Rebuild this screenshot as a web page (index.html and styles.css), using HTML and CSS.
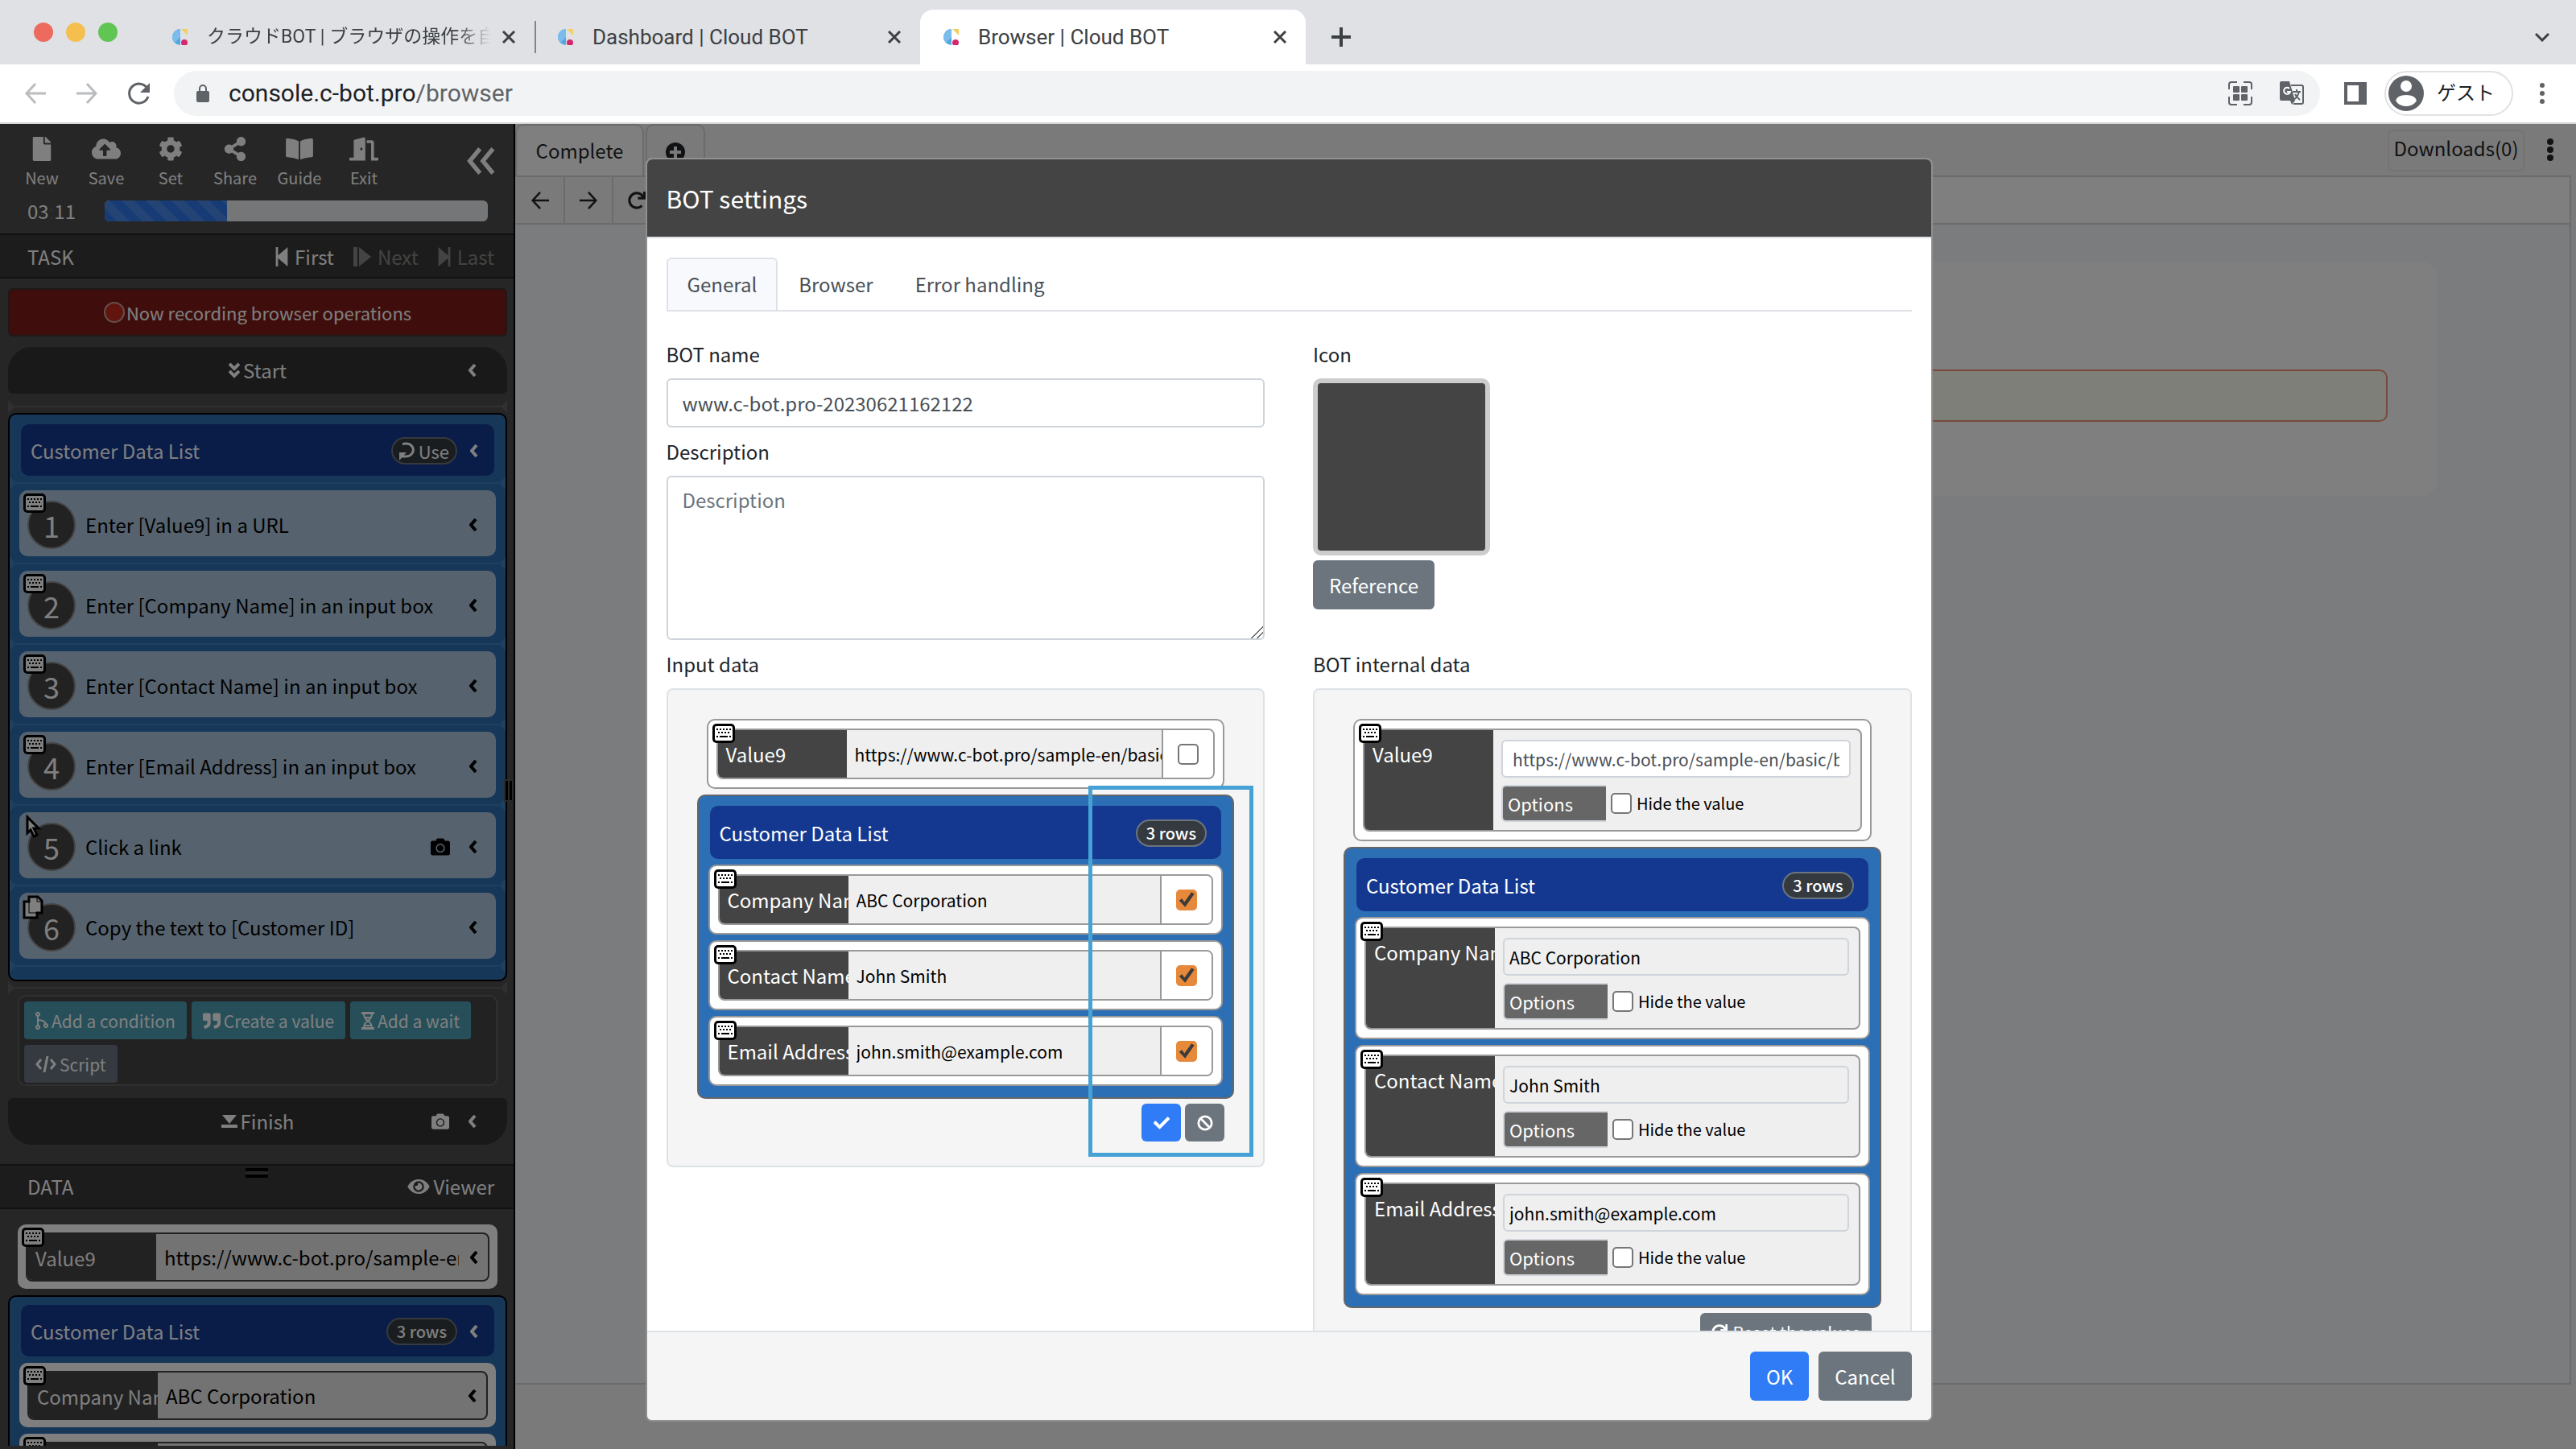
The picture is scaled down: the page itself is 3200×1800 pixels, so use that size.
FILE: index.html
```html
<!DOCTYPE html>
<html lang="en">
<head>
  <meta charset="UTF-8">
  <meta name="viewport" content="width=device-width, initial-scale=1.0">
  <title>Browser | Cloud BOT</title>
  <link rel="stylesheet" href="styles.css">
</head>
<body>
  <!-- icon sprite -->
  <svg class="sprite" aria-hidden="true">
    <symbol id="i-logo" viewBox="0 0 20 20"><path fill="#4fa9e0" d="M11 0A10 10 0 0 0 11 20Z"/><path fill="#7cbcec" d="M11 0A10 10 0 0 0 4 17L11 10Z"/><path fill="#f2cf63" d="M12 0h8v8Z"/><circle fill="#d42a6d" cx="16" cy="17" r="4"/></symbol>
    <symbol id="i-x" viewBox="0 0 16 16"><path d="M1 1l14 14M15 1L1 15" stroke="currentColor" stroke-width="3"/></symbol>
    <symbol id="i-plus" viewBox="0 0 24 24"><path d="M12 0v24M0 12h24" stroke="currentColor" stroke-width="4"/></symbol>
    <symbol id="i-down" viewBox="0 0 18 12"><path d="M1 2l8 8 8-8" fill="none" stroke="currentColor" stroke-width="3"/></symbol>
    <symbol id="i-back" viewBox="0 0 26 26"><path d="M26 13H2M13 1L2 13l11 12" fill="none" stroke="currentColor" stroke-width="3"/></symbol>
    <symbol id="i-fwd" viewBox="0 0 26 26"><path d="M0 13h24M13 1l11 12-11 12" fill="none" stroke="currentColor" stroke-width="3"/></symbol>
    <symbol id="i-reload" viewBox="0 0 28 28"><path d="M24 8A12 12 0 1 0 25 18" fill="none" stroke="currentColor" stroke-width="3"/><path fill="currentColor" d="M27 1v12H15Z"/></symbol>
    <symbol id="i-lock" viewBox="0 0 16 22"><rect y="8" width="16" height="14" rx="2" fill="currentColor"/><path d="M4 9V5a4 4 0 0 1 8 0v4" fill="none" stroke="currentColor" stroke-width="2"/></symbol>
    <symbol id="i-apps" viewBox="0 0 30 30"><path d="M1 10V4a3 3 0 0 1 3-3h7M19 1h7a3 3 0 0 1 3 3v6M29 19v7a3 3 0 0 1-3 3h-7M11 29H4a3 3 0 0 1-3-3v-7" fill="none" stroke="currentColor" stroke-width="2"/><g fill="currentColor"><rect x="6" y="6" width="8" height="8" rx="1"/><rect x="16" y="6" width="8" height="8" rx="1"/><rect x="6" y="16" width="8" height="8" rx="1"/><rect x="16" y="16" width="8" height="8" rx="1"/></g></symbol>
    <symbol id="i-translate" viewBox="0 0 30 30"><path d="M14 5h13a2 2 0 0 1 2 2v19a2 2 0 0 1-2 2H17" fill="none" stroke="currentColor" stroke-width="2"/><path fill="currentColor" d="M2 0h10l7 24-4 5-2-5H2a2 2 0 0 1-2-2V2a2 2 0 0 1 2-2Z"/><path d="M12 9a4 4 0 1 0 1 4H9" fill="none" stroke="#fff" stroke-width="2"/><path d="M16 13h10M21 10v3M24 13q-2 7-7 10M19 16q2 4 6 7" fill="none" stroke="currentColor" stroke-width="2"/></symbol>
    <symbol id="i-panel" viewBox="0 0 28 28"><path fill="currentColor" fill-rule="evenodd" d="M0 0h28v28H0ZM4 4v20h14V4Z"/></symbol>
    <symbol id="i-user" viewBox="0 0 44 44"><circle cx="22" cy="22" r="22" fill="currentColor"/><circle cx="22" cy="13" r="7" fill="#fff"/><path fill="#fff" d="M9 31q2-7 13-7t13 7q-4 7-13 7T9 31Z"/></symbol>
    <symbol id="i-dots" viewBox="0 0 8 26"><g fill="currentColor"><circle cx="4" cy="3" r="3"/><circle cx="4" cy="13" r="3"/><circle cx="4" cy="23" r="3"/></g></symbol>
    <symbol id="i-vdots" viewBox="0 0 8 28"><g fill="currentColor"><circle cx="4" cy="4" r="4"/><circle cx="4" cy="14" r="4"/><circle cx="4" cy="24" r="4"/></g></symbol>
    <symbol id="i-file" viewBox="0 0 384 512"><path fill="currentColor" d="M224 136V0H24C10.700 0 0 10.700 0 24v464c0 13.300 10.700 24 24 24h336c13.300 0 24-10.700 24-24V160H248c-13.200 0-24-10.800-24-24zm160-14.100v6.100H256V0h6.100c6.400 0 12.500 2.500 17 7l97.900 98c4.500 4.500 7 10.600 7 16.900z"/></symbol>
    <symbol id="i-save" viewBox="0 0 640 512"><path fill="currentColor" d="M537.6 226.6c4.1-10.7 6.4-22.4 6.4-34.6 0-53-43-96-96-96-19.7 0-38.1 6-53.3 16.2C367 64.2 315.3 32 256 32c-88.4 0-160 71.6-160 160 0 2.700.1 5.400.2 8.100C40.200 219.800 0 273.200 0 336c0 79.500 64.500 144 144 144h368c70.700 0 128-57.300 128-128 0-61.900-44-113.600-102.400-125.400zM393.400 288H328v112c0 8.800-7.200 16-16 16h-48c-8.800 0-16-7.200-16-16V288h-65.400c-14.300 0-21.400-17.200-11.300-27.300l105.400-105.400c6.200-6.200 16.400-6.200 22.600 0l105.400 105.400c10.100 10.100 2.900 27.300-11.300 27.300z"/></symbol>
    <symbol id="i-cog" viewBox="0 0 512 512"><path fill="currentColor" d="M487.4 315.7l-42.6-24.6c4.3-23.2 4.3-47 0-70.2l42.6-24.6c4.9-2.8 7.1-8.6 5.5-14-11.1-35.6-30-67.8-54.7-94.6-3.8-4.1-10-5.1-14.8-2.3L380.8 110c-17.9-15.4-38.5-27.3-60.8-35.1V25.8c0-5.6-3.9-10.5-9.4-11.700-36.700-8.200-74.300-7.800-109.200 0-5.500 1.200-9.400 6.100-9.400 11.700V75c-22.200 7.900-42.800 19.800-60.800 35.100L88.700 85.500c-4.900-2.800-11-1.900-14.800 2.300-24.700 26.700-43.600 58.900-54.700 94.600-1.700 5.400.6 11.200 5.500 14L67.300 221c-4.300 23.200-4.300 47 0 70.200l-42.600 24.600c-4.900 2.800-7.100 8.600-5.500 14 11.100 35.600 30 67.800 54.700 94.600 3.800 4.100 10 5.100 14.800 2.300l42.600-24.600c17.900 15.400 38.500 27.300 60.800 35.100v49.200c0 5.600 3.900 10.500 9.400 11.700 36.700 8.200 74.300 7.800 109.200 0 5.500-1.200 9.400-6.100 9.400-11.700v-49.200c22.200-7.900 42.800-19.800 60.800-35.100l42.600 24.600c4.900 2.800 11 1.900 14.800-2.300 24.700-26.700 43.600-58.900 54.700-94.600 1.500-5.500-.7-11.300-5.600-14.100zM256 336c-44.100 0-80-35.900-80-80s35.900-80 80-80 80 35.900 80 80-35.900 80-80 80z"/></symbol>
    <symbol id="i-share" viewBox="0 0 448 512"><path fill="currentColor" d="M352 320c-22.608 0-43.387 7.819-59.79 20.895l-102.486-64.054a96.551 96.551 0 0 0 0-41.683l102.486-64.054C308.613 184.181 329.392 192 352 192c53.019 0 96-42.981 96-96S405.019 0 352 0s-96 42.981-96 96c0 7.158.79 14.13 2.276 20.841L155.79 180.895C139.387 167.819 118.608 160 96 160c-53.019 0-96 42.981-96 96s42.981 96 96 96c22.608 0 43.387-7.819 59.79-20.895l102.486 64.054A96.301 96.301 0 0 0 256 416c0 53.019 42.981 96 96 96s96-42.981 96-96-42.981-96-96-96z"/></symbol>
    <symbol id="i-book" viewBox="0 0 576 512"><path fill="currentColor" d="M542.22 32.05c-54.8 3.11-163.72 14.43-230.96 55.59-4.64 2.84-7.27 7.89-7.27 13.17v363.87c0 11.55 12.63 18.85 23.28 13.49 69.18-34.82 169.23-44.32 218.7-46.92 16.89-.89 30.02-14.43 30.02-30.66V62.75c.01-17.71-15.35-31.74-33.77-30.7zM264.73 87.64C197.5 46.48 88.58 35.17 33.78 32.05 15.36 31.01 0 45.04 0 62.75V400.6c0 16.24 13.13 29.78 30.02 30.66 49.49 2.6 149.59 12.11 218.77 46.95 10.62 5.35 23.21-1.94 23.21-13.46V100.63c0-5.29-2.62-10.14-7.27-12.99z"/></symbol>
    <symbol id="i-exit" viewBox="0 0 640 512"><path fill="currentColor" d="M624 448h-80V113.450C544 86.190 522.470 64 496 64H384v64h96v384h144c8.840 0 16-7.160 16-16v-32c0-8.840-7.160-16-16-16zM312.240 1.010l-192 49.740C105.990 54.440 96 67.700 96 82.920V448H16c-8.840 0-16 7.160-16 16v32c0 8.840 7.160 16 16 16h336V33.180c0-21.580-19.560-37.410-39.760-32.170zM264 288c-13.250 0-24-14.330-24-32s10.750-32 24-32 24 14.330 24 32-10.750 32-24 32z"/></symbol>
    <symbol id="i-fold" viewBox="0 0 40 40"><path d="M18 3L4 20l14 17M36 3L22 20l14 17" fill="none" stroke="currentColor" stroke-width="6"/></symbol>
    <symbol id="i-first" viewBox="0 0 16 26"><path fill="currentColor" d="M0 0h3v11L16 0v26L3 15v11H0Z"/></symbol>
    <symbol id="i-last" viewBox="0 0 16 26"><path fill="currentColor" d="M16 0h-3v11L0 0v26l13-11v11h3Z"/></symbol>
    <symbol id="i-next" viewBox="0 0 22 24"><path fill="currentColor" d="M0 0h5v24H0ZM7 0l15 12L7 24Z"/></symbol>
    <symbol id="i-start" viewBox="0 0 14 20"><path d="M1 2l6 6 6-6M1 11l6 6 6-6" fill="none" stroke="currentColor" stroke-width="4"/></symbol>
    <symbol id="i-finish" viewBox="0 0 20 16"><path fill="currentColor" d="M1 0h18l-9 11ZM0 12h20v4H0Z"/></symbol>
    <symbol id="i-left" viewBox="0 0 10 16"><path d="M8 1L2 8l6 7" fill="none" stroke="currentColor" stroke-width="4"/></symbol>
    <symbol id="i-loop" viewBox="0 0 20 24"><path d="M4 4a9 8 0 1 1 4 15H3" fill="none" stroke="currentColor" stroke-width="3"/><path fill="currentColor" d="M0 24V14h9Z"/></symbol>
    <symbol id="i-keyboard" viewBox="0 0 30 26"><rect x="1" y="1" width="28" height="24" rx="5" fill="#000"/><rect x="4" y="4" width="22" height="18" rx="2" fill="#fff"/><path d="M6 8h18M8 12h14" stroke="#000" stroke-width="2" stroke-dasharray="2 2"/><path d="M6 17h2M10 17h10M22 17h2" stroke="#000" stroke-width="2"/></symbol>
    <symbol id="i-cursor" viewBox="0 0 20 30"><path d="M3 3v20l4-4 4 8 4-2-4-8h6Z" fill="#fff" stroke="#000" stroke-width="3"/></symbol>
    <symbol id="i-copy" viewBox="0 0 26 30"><path d="M2 8h6V2h11l5 5v15h-6v6H2Z" fill="#fff" stroke="#000" stroke-width="3"/><path d="M8 8v14h10M18 3v5h5" fill="none" stroke="#000" stroke-width="1"/></symbol>
    <symbol id="i-camera" viewBox="0 0 512 512"><path fill="currentColor" d="M512 144v288c0 26.500-21.500 48-48 48H48c-26.500 0-48-21.500-48-48V144c0-26.500 21.500-48 48-48h88l12.300-32.900c7-18.700 24.900-31.100 44.900-31.100h125.500c20 0 37.900 12.400 44.900 31.100L376 96h88c26.500 0 48 21.500 48 48zM376 288c0-66.200-53.800-120-120-120s-120 53.800-120 120 53.800 120 120 120 120-53.800 120-120zm-32 0c0 48.500-39.500 88-88 88s-88-39.500-88-88 39.500-88 88-88 88 39.500 88 88z"/></symbol>
    <symbol id="i-branch" viewBox="0 0 16 22"><path d="M3 4v14M3 10q9 0 10 6" fill="none" stroke="currentColor" stroke-width="2"/><circle cx="3" cy="3" r="2" fill="none" stroke="currentColor" stroke-width="2"/><circle cx="3" cy="19" r="2" fill="none" stroke="currentColor" stroke-width="2"/><circle cx="13" cy="17" r="2" fill="none" stroke="currentColor" stroke-width="2"/></symbol>
    <symbol id="i-quote" viewBox="0 0 512 512"><path fill="currentColor" d="M464 32H336c-26.500 0-48 21.500-48 48v128c0 26.500 21.500 48 48 48h80v64c0 35.300-28.700 64-64 64h-8c-13.300 0-24 10.700-24 24v48c0 13.300 10.700 24 24 24h8c88.400 0 160-71.600 160-160V80c0-26.500-21.500-48-48-48zm-288 0H48C21.500 32 0 53.500 0 80v128c0 26.500 21.500 48 48 48h80v64c0 35.300-28.700 64-64 64h-8c-13.300 0-24 10.700-24 24v48c0 13.300 10.700 24 24 24h8c88.400 0 160-71.600 160-160V80c0-26.500-21.500-48-48-48z"/></symbol>
    <symbol id="i-wait" viewBox="0 0 16 22"><path fill="currentColor" d="M0 0h16v3H0ZM0 19h16v3H0Z"/><path d="M3 2q0 6 5 9-5 3-5 9M13 2q0 6-5 9 5 3 5 9M4 7h8M4 17h8" fill="none" stroke="currentColor" stroke-width="2"/></symbol>
    <symbol id="i-code" viewBox="0 0 26 22"><path d="M7 5l-5 6 5 6M19 5l5 6-5 6M15 1l-4 20" fill="none" stroke="currentColor" stroke-width="3"/></symbol>
    <symbol id="i-eye" viewBox="0 0 576 512"><path fill="currentColor" d="M572.52 241.4C518.29 135.59 410.93 64 288 64S57.68 135.64 3.48 241.41a32.35 32.35 0 0 0 0 29.19C57.71 376.41 165.07 448 288 448s230.32-71.64 284.52-177.41a32.35 32.35 0 0 0 0-29.19zM288 400a144 144 0 1 1 144-144 143.93 143.93 0 0 1-144 144zm0-240a95.31 95.31 0 0 0-25.31 3.79 47.85 47.85 0 0 1-66.9 66.9A95.78 95.78 0 1 0 288 160z"/></symbol>
    <symbol id="i-add" viewBox="0 0 24 24"><circle cx="12" cy="12" r="12" fill="currentColor"/><path d="M12 5v14M5 12h14" stroke="#f4f4f4" stroke-width="4"/></symbol>
    <symbol id="i-redo" viewBox="0 0 512 512"><path fill="currentColor" d="M500.33 0h-47.410a12 12 0 0 0-12 12.570l4 82.760A247.420 247.420 0 0 0 256 8C119.340 8 7.900 119.530 8 256.190 8.100 393.070 119.100 504 256 504a247.100 247.100 0 0 0 166.180-63.910 12 12 0 0 0 .48-17.430l-34-34a12 12 0 0 0-16.380-.55A176 176 0 1 1 402.100 157.800l-101.530-4.870a12 12 0 0 0-12.570 12v47.410a12 12 0 0 0 12 12h200.330a12 12 0 0 0 12-12V12a12 12 0 0 0-12-12z"/></symbol>
    <symbol id="i-check" viewBox="0 0 512 512"><path fill="currentColor" d="M173.898 439.404l-166.4-166.4c-9.997-9.997-9.997-26.206 0-36.204l36.203-36.204c9.997-9.998 26.207-9.998 36.204 0L192 312.69 432.095 72.596c9.997-9.997 26.207-9.997 36.204 0l36.203 36.204c9.997 9.997 9.997 26.206 0 36.204l-294.4 294.401c-9.998 9.997-26.207 9.997-36.204-.001z"/></symbol>
    <symbol id="i-ban" viewBox="0 0 22 22"><circle cx="11" cy="11" r="9" fill="none" stroke="currentColor" stroke-width="3"/><path d="M5 5l12 12" stroke="currentColor" stroke-width="3"/></symbol>
  </svg>

  <!-- browser chrome -->
  <header class="tab-strip">
    <div class="lights"><i class="red"></i><i class="yellow"></i><i class="green"></i></div>
    <nav class="tabs">
      <div class="tab"><svg class="favicon"><use href="#i-logo"/></svg><a href="#" class="fade">クラウドBOT | ブラウザの操作を自動化</a><button aria-label="Close tab"><svg class="x"><use href="#i-x"/></svg></button></div>
      <div class="tab ruled"><svg class="favicon"><use href="#i-logo"/></svg><a href="#">Dashboard | Cloud BOT</a><button aria-label="Close tab"><svg class="x"><use href="#i-x"/></svg></button></div>
      <div class="tab active"><svg class="favicon"><use href="#i-logo"/></svg><a href="#">Browser | Cloud BOT</a><button aria-label="Close tab"><svg class="x"><use href="#i-x"/></svg></button></div>
    </nav>
    <button class="new-tab" aria-label="New tab"><svg class="s24"><use href="#i-plus"/></svg></button>
    <button class="tab-search" aria-label="Search tabs"><svg class="down"><use href="#i-down"/></svg></button>
  </header>
  <div class="toolbar">
    <button class="dim" aria-label="Back"><svg class="s26"><use href="#i-back"/></svg></button>
    <button class="dim" aria-label="Forward"><svg class="s26"><use href="#i-fwd"/></svg></button>
    <button aria-label="Reload"><svg class="s28"><use href="#i-reload"/></svg></button>
    <div class="omnibox">
      <svg class="lock"><use href="#i-lock"/></svg>
      <div class="url">console.c-bot.pro<span>/browser</span></div>
      <button aria-label="Apps"><svg class="s30"><use href="#i-apps"/></svg></button>
      <button aria-label="Translate"><svg class="s30"><use href="#i-translate"/></svg></button>
    </div>
    <button class="side-panel" aria-label="Side panel"><svg class="s28"><use href="#i-panel"/></svg></button>
    <button class="profile"><svg class="avatar"><use href="#i-user"/></svg>ゲスト</button>
    <button class="menu" aria-label="Menu"><svg class="dots"><use href="#i-dots"/></svg></button>
  </div>

  <div class="console">
    <aside class="sidebar">
      <div class="tools">
        <button><svg><use href="#i-file"/></svg>New</button>
        <button><svg><use href="#i-save"/></svg>Save</button>
        <button><svg><use href="#i-cog"/></svg>Set</button>
        <button><svg><use href="#i-share"/></svg>Share</button>
        <button><svg><use href="#i-book"/></svg>Guide</button>
        <button><svg><use href="#i-exit"/></svg>Exit</button>
        <button class="fold" aria-label="Fold"><svg><use href="#i-fold"/></svg></button>
      </div>
      <div class="timer"><span class="clock">03<i>:</i>11</span><div class="progress"><div class="progress-bar" style="width: 32%"></div></div></div>

      <div class="section-head">
        <h2>TASK</h2>
        <button><svg class="first"><use href="#i-first"/></svg>First</button>
        <button disabled><svg class="next"><use href="#i-next"/></svg>Next</button>
        <button disabled><svg class="first"><use href="#i-last"/></svg>Last</button>
      </div>
      <div class="task-list">
        <div class="recording"><i></i>Now recording browser operations</div>
        <div class="terminal start"><svg class="start-icon"><use href="#i-start"/></svg>Start<div class="end"><svg class="left"><use href="#i-left"/></svg></div></div>
        <div class="drop"><i></i></div>
        <div class="group">
          <div class="group-head">Customer Data List<span class="pill use"><svg><use href="#i-loop"/></svg>Use</span><svg class="left"><use href="#i-left"/></svg></div>
          <div class="drop"><i></i></div>
          <div class="step"><svg class="kind"><use href="#i-keyboard"/></svg><b>1</b>Enter [Value9] in a URL<div class="end"><svg class="left"><use href="#i-left"/></svg></div></div>
          <div class="drop"><i></i></div>
          <div class="step"><svg class="kind"><use href="#i-keyboard"/></svg><b>2</b>Enter [Company Name] in an input box<div class="end"><svg class="left"><use href="#i-left"/></svg></div></div>
          <div class="drop"><i></i></div>
          <div class="step"><svg class="kind"><use href="#i-keyboard"/></svg><b>3</b>Enter [Contact Name] in an input box<div class="end"><svg class="left"><use href="#i-left"/></svg></div></div>
          <div class="drop"><i></i></div>
          <div class="step"><svg class="kind"><use href="#i-keyboard"/></svg><b>4</b>Enter [Email Address] in an input box<div class="end"><svg class="left"><use href="#i-left"/></svg></div></div>
          <div class="drop"><i></i></div>
          <div class="step"><svg class="kind tall"><use href="#i-cursor"/></svg><b>5</b>Click a link<div class="end"><svg class="s24"><use href="#i-camera"/></svg><svg class="left"><use href="#i-left"/></svg></div></div>
          <div class="drop"><i></i></div>
          <div class="step"><svg class="kind tall"><use href="#i-copy"/></svg><b>6</b>Copy the text to [Customer ID]<div class="end"><svg class="left"><use href="#i-left"/></svg></div></div>
          <div class="drop"><i></i></div>
        </div>
        <div class="drop"><i></i></div>
        <div class="adders">
          <button><svg class="branch"><use href="#i-branch"/></svg>Add a condition</button>
          <button><svg class="quote"><use href="#i-quote"/></svg>Create a value</button>
          <button><svg class="branch"><use href="#i-wait"/></svg>Add a wait</button>
          <button class="grey"><svg class="code"><use href="#i-code"/></svg>Script</button>
        </div>
        <div class="terminal finish"><svg class="finish-icon"><use href="#i-finish"/></svg>Finish<div class="end"><svg class="s22"><use href="#i-camera"/></svg><svg class="left"><use href="#i-left"/></svg></div></div>
      </div>

      <div class="section-head data-head">
        <h2>DATA</h2>
        <button><svg class="eye"><use href="#i-eye"/></svg>Viewer</button>
        <div class="grip"></div>
      </div>
      <div class="data-list">
        <div class="datum lone"><svg class="kind"><use href="#i-keyboard"/></svg><div class="datum-row"><span class="key">Value9</span><span class="val">https://www.c-bot.pro/sample-en/basic/</span><svg class="left"><use href="#i-left"/></svg></div></div>
        <div class="group">
          <div class="group-head">Customer Data List<span class="pill">3 rows</span><svg class="left"><use href="#i-left"/></svg></div>
          <div class="datum"><svg class="kind"><use href="#i-keyboard"/></svg><div class="datum-row"><span class="key">Company Name</span><span class="val">ABC Corporation</span><svg class="left"><use href="#i-left"/></svg></div></div>
          <div class="datum"><svg class="kind"><use href="#i-keyboard"/></svg><div class="datum-row"><span class="key">Contact Name</span><span class="val">John Smith</span><svg class="left"><use href="#i-left"/></svg></div></div>
        </div>
      </div>
      <div class="side-grip"></div>
    </aside>

    <main class="viewer">
      <div class="viewer-tabs">
        <a href="#" class="current">Complete</a>
        <button aria-label="Add tab"><svg class="s24"><use href="#i-add"/></svg></button>
        <div class="spacer"></div>
        <button class="downloads">Downloads(0)</button>
        <button class="more" aria-label="More"><svg><use href="#i-vdots"/></svg></button>
      </div>
      <div class="viewer-frame">
        <div class="viewer-nav">
          <button aria-label="Back"><svg class="s22"><use href="#i-back"/></svg></button>
          <button aria-label="Forward"><svg class="s22"><use href="#i-fwd"/></svg></button>
          <button aria-label="Reload"><svg class="s22"><use href="#i-redo"/></svg></button>
          <div class="address"></div>
        </div>
        <div class="page">
          <div class="page-card"><input type="text" aria-label="Customer ID"></div>
        </div>
      </div>
    </main>

    <div class="backdrop">
      <div class="modal" role="dialog" aria-labelledby="modalTitle">
        <div class="modal-header"><h1 id="modalTitle">BOT settings</h1></div>
        <div class="modal-body">
          <nav class="nav-tabs">
            <a href="#" class="active">General</a>
            <a href="#">Browser</a>
            <a href="#">Error handling</a>
          </nav>
          <div class="columns">
            <form class="col">
              <label for="botName">BOT name</label>
              <input class="control" type="text" id="botName" value="www.c-bot.pro-20230621162122">
              <label for="description">Description</label>
              <textarea class="control" id="description" placeholder="Description"></textarea>
            </form>
            <div class="col">
              <div class="label">Icon</div>
              <div class="bot-icon"></div>
              <button class="btn">Reference</button>
            </div>
            <div class="col">
              <div class="label">Input data</div>
              <div class="panel">
                <div class="field"><svg class="kind"><use href="#i-keyboard"/></svg><div class="field-row"><label class="key" for="in1">Value9</label><span class="val">https://www.c-bot.pro/sample-en/basic/</span><span class="pick"><input type="checkbox" id="in1"></span></div></div>
                <div class="field-group">
                  <div class="group-head">Customer Data List<span class="pill">3 rows</span></div>
                  <div class="field"><svg class="kind"><use href="#i-keyboard"/></svg><div class="field-row"><label class="key" for="in2">Company Name</label><span class="val">ABC Corporation</span><span class="pick"><input type="checkbox" id="in2" checked></span></div></div>
                  <div class="field"><svg class="kind"><use href="#i-keyboard"/></svg><div class="field-row"><label class="key" for="in3">Contact Name</label><span class="val">John Smith</span><span class="pick"><input type="checkbox" id="in3" checked></span></div></div>
                  <div class="field"><svg class="kind"><use href="#i-keyboard"/></svg><div class="field-row"><label class="key" for="in4">Email Address</label><span class="val">john.smith@example.com</span><span class="pick"><input type="checkbox" id="in4" checked></span></div></div>
                </div>
                <div class="panel-actions">
                  <button class="btn primary square" aria-label="Select all"><svg class="s20"><use href="#i-check"/></svg></button>
                  <button class="btn square" aria-label="Clear"><svg class="s20"><use href="#i-ban"/></svg></button>
                </div>
                <div class="highlight"></div>
              </div>
            </div>
            <div class="col">
              <div class="label">BOT internal data</div>
              <div class="panel">
                <div class="field"><svg class="kind"><use href="#i-keyboard"/></svg><div class="field-row"><label class="key" for="v1">Value9</label><div class="editor"><input type="text" class="boxed" id="v1" value="https://www.c-bot.pro/sample-en/basic/basic"><div class="options"><span>Options</span><input type="checkbox" id="h1"><label for="h1">Hide the value</label></div></div></div></div>
                <div class="field-group">
                  <div class="group-head">Customer Data List<span class="pill">3 rows</span></div>
                  <div class="field"><svg class="kind"><use href="#i-keyboard"/></svg><div class="field-row"><label class="key" for="v2">Company Name</label><div class="editor"><input type="text" id="v2" value="ABC Corporation" readonly><div class="options"><span>Options</span><input type="checkbox" id="h2"><label for="h2">Hide the value</label></div></div></div></div>
                  <div class="field"><svg class="kind"><use href="#i-keyboard"/></svg><div class="field-row"><label class="key" for="v3">Contact Name</label><div class="editor"><input type="text" id="v3" value="John Smith" readonly><div class="options"><span>Options</span><input type="checkbox" id="h3"><label for="h3">Hide the value</label></div></div></div></div>
                  <div class="field"><svg class="kind"><use href="#i-keyboard"/></svg><div class="field-row"><label class="key" for="v4">Email Address</label><div class="editor"><input type="text" id="v4" value="john.smith@example.com" readonly><div class="options"><span>Options</span><input type="checkbox" id="h4"><label for="h4">Hide the value</label></div></div></div></div>
                </div>
                <div class="panel-actions">
                  <button class="btn reset"><svg class="s20"><use href="#i-redo"/></svg>Reset the values</button>
                </div>
              </div>
            </div>
          </div>
        </div>
        <div class="modal-footer">
          <button class="btn primary">OK</button>
          <button class="btn">Cancel</button>
        </div>
      </div>
    </div>
  </div>
</body>
</html>
```
FILE: styles.css
```css
* {
  box-sizing: border-box;
}
body {
  margin: 0;
  height: 100vh;
  display: flex;
  flex-direction: column;
  overflow: hidden;
  font-family: "Noto Sans CJK JP", sans-serif;
  font-size: 24px;
  line-height: 36px;
  color: #212529;
}
button, input, textarea {
  font: inherit;
  color: inherit;
}
button {
  display: flex;
  align-items: center;
  justify-content: center;
  background: none;
  border: none;
  padding: 0;
  cursor: pointer;
}
a {
  color: inherit;
  text-decoration: none;
}
h1, h2 {
  margin: 0;
  font-weight: 400;
}
svg {
  flex: none;
}
.sprite {
  display: none;
}
.s20 { width: 20px; height: 20px; }
.s22 { width: 22px; height: 22px; }
.s24 { width: 24px; height: 24px; }
.s26 { width: 26px; height: 26px; }
.s28 { width: 28px; height: 28px; }
.s30 { width: 30px; height: 30px; }

/* browser chrome */
.tab-strip {
  display: flex;
  align-items: flex-end;
  height: 80px;
  background: #dfe1e5;
  color: #3c4043;
  font-family: Roboto, "Noto Sans CJK JP", sans-serif;
  font-size: 26px;
}
.lights {
  display: flex;
  gap: 16px;
  width: 185px;
  padding-left: 42px;
  align-self: center;
}
.lights i {
  width: 24px;
  height: 24px;
  border-radius: 50%;
}
.red { background: #ed6a5e; }
.yellow { background: #f5bf4f; }
.green { background: #61c554; }
.tabs {
  display: flex;
}
.tab {
  display: flex;
  align-items: center;
  width: 479px;
  height: 68px;
  padding: 0 24px 0 28px;
}
.tab a {
  flex: 1;
  margin: 0 14px 0 24px;
  overflow: hidden;
  white-space: nowrap;
}
.tab .fade {
  font-size: 23px;
  mask-image: linear-gradient(90deg, #000 88%, transparent);
}
.tab.ruled {
  background: linear-gradient(#80868b, #80868b) 0 14px / 2px 40px no-repeat;
}
.tab.active {
  background: #fff;
  border-radius: 16px 16px 0 0;
}
.favicon {
  width: 20px;
  height: 20px;
}
.x {
  width: 16px;
  height: 16px;
}
.new-tab {
  height: 68px;
  margin-left: 32px;
}
.tab-search {
  height: 68px;
  margin: 0 33px 0 auto;
}
.down {
  width: 18px;
  height: 12px;
}
.toolbar {
  display: flex;
  align-items: center;
  height: 74px;
  padding: 0 38px 0 31px;
  background: #fff;
  border-bottom: 2px solid #d5d6d8;
  color: #5f6368;
  font-family: Roboto, "Noto Sans CJK JP", sans-serif;
}
.toolbar > button {
  margin-right: 38px;
}
.toolbar > .dim {
  color: #babcbe;
}
.omnibox {
  display: flex;
  align-items: center;
  flex: 1;
  height: 56px;
  margin-left: -9px;
  padding: 0 20px 0 28px;
  border-radius: 28px;
  background: #f1f3f4;
}
.omnibox button {
  margin-left: 34px;
}
.lock {
  width: 16px;
  height: 22px;
}
.url {
  flex: 1;
  margin-left: 24px;
  font-size: 30px;
  color: #202124;
}
.url span {
  color: #5f6368;
}
.toolbar > .side-panel {
  margin: 0 22px 0 30px;
}
.toolbar > .profile {
  gap: 16px;
  width: 160px;
  height: 56px;
  padding-right: 18px;
  margin-right: 32px;
  border: 2px solid #dfe1e3;
  border-radius: 28px;
  color: #202124;
}
.avatar {
  width: 44px;
  height: 44px;
  color: #5f6368;
}
.toolbar > .menu {
  margin: 0;
}
.dots {
  width: 8px;
  height: 26px;
}

.console {
  position: relative;
  flex: 1;
  min-height: 0;
  display: grid;
  grid-template-columns: 640px 1fr;
  grid-template-rows: 100%;
}

/* sidebar */
.sidebar {
  position: relative;
  display: flex;
  flex-direction: column;
  padding-bottom: 4px;
  background: #4c4c4c;
  border-right: 2px solid #000;
  color: #fff;
}
.tools {
  display: flex;
  align-items: flex-start;
  padding: 16px 20px 10px 12px;
}
.tools button {
  flex-direction: column;
  gap: 6px;
  width: 80px;
  font-size: 20px;
  line-height: 30px;
}
.tools svg {
  width: 36px;
  height: 30px;
}
.tools .fold {
  width: 40px;
  margin: 12px 0 0 auto;
}
.tools .fold svg {
  width: 40px;
  height: 36px;
}
.timer {
  display: flex;
  align-items: center;
  height: 32px;
  margin: 0 32px 12px 34px;
}
.clock {
  width: 96px;
}
.clock i {
  font-style: normal;
  color: #5c5c5c;
}
.progress {
  flex: 1;
  height: 26px;
  border-radius: 6px;
  background: #e9ecef;
  overflow: hidden;
}
.progress-bar {
  height: 100%;
  background: repeating-linear-gradient(45deg, #2e76ea 0 11px, #4a88ec 11px 22px);
}
.section-head {
  position: relative;
  display: flex;
  align-items: center;
  gap: 24px;
  height: 56px;
  padding: 2px 24px 0 34px;
  background: #383838;
  border-top: 2px solid #222;
  border-bottom: 2px solid #222;
}
.section-head h2 {
  flex: 1;
  font-size: 24px;
}
.section-head button {
  gap: 8px;
}
.section-head button:disabled {
  color: #888;
}
.first {
  width: 16px;
  height: 24px;
}
.next {
  width: 22px;
  height: 24px;
}
.eye {
  width: 28px;
  height: 24px;
}
.section-head.data-head {
  padding-top: 0;
}
.data-head button {
  gap: 4px;
}
.task-list {
  padding: 12px 8px 24px 10px;
}
.recording {
  display: flex;
  align-items: center;
  justify-content: center;
  gap: 2px;
  height: 60px;
  margin-bottom: 13px;
  background: #7e1c18;
  border: 2px solid #3c3030;
  border-radius: 6px;
  font-size: 22px;
}
.recording i {
  width: 26px;
  height: 26px;
  border: 2px solid #c8a09c;
  border-radius: 50%;
  background: #c4281e;
}
.terminal {
  position: relative;
  display: flex;
  align-items: center;
  justify-content: center;
  gap: 4px;
  height: 58px;
  background: #323232;
}
.start {
  border-radius: 30px 30px 6px 6px;
}
.finish {
  margin-top: 15px;
  border-radius: 6px 6px 30px 30px;
}
.start-icon {
  width: 14px;
  height: 20px;
}
.finish-icon {
  width: 20px;
  height: 16px;
}
.end {
  display: flex;
  align-items: center;
  gap: 24px;
  position: absolute;
  right: 38px;
}
.left {
  width: 10px;
  height: 16px;
}
.drop {
  display: flex;
  align-items: center;
  height: 16px;
  color: #606060;
}
.start + .drop {
  margin-top: 8px;
}
.drop::before, .drop::after {
  content: "";
  border: 8px solid transparent;
  border-width: 8px 0 8px 8px;
  border-left-color: currentColor;
}
.drop::after {
  border-width: 8px 8px 8px 0;
  border-right-color: currentColor;
}
.drop i {
  flex: 1;
  height: 2px;
  background: currentColor;
}
.group {
  padding: 12px 12px 8px;
  background: #2e6eb2;
  border: 2px solid #000;
  border-radius: 10px;
}
.group .drop {
  height: 18px;
  margin: 0 -12px;
  color: #3c80c2;
}
.group-head {
  display: flex;
  align-items: center;
  height: 64px;
  margin: 0 2px;
  padding: 2px 20px 0 12px;
  border-radius: 10px;
  background: #143890;
  color: #fff;
}
.pill {
  display: flex;
  align-items: center;
  gap: 4px;
  height: 34px;
  margin: 0 16px 0 auto;
  padding: 0 11px;
  border: 2px solid #6c757d;
  border-radius: 17px;
  background: #343a40;
  font-size: 20px;
  font-weight: 500;
}
.use {
  padding: 0 8px;
  font-size: 22px;
  font-weight: 400;
}
.pill svg {
  width: 20px;
  height: 24px;
}
.step {
  position: relative;
  display: flex;
  align-items: center;
  gap: 12px;
  height: 82px;
  padding: 3px 0 0 10px;
  border-radius: 10px;
  background: #acc6de;
  color: #000;
}
.step .end {
  right: 23px;
}
.step b {
  width: 60px;
  height: 60px;
  border: 2px solid #8a8a8a;
  border-radius: 50%;
  background: #444;
  color: #fff;
  font-size: 36px;
  font-weight: 400;
  line-height: 56px;
  text-align: center;
}
.kind {
  position: absolute;
  left: 4px;
  top: 3px;
  width: 30px;
  height: 26px;
}
.tall {
  width: 26px;
  height: 30px;
}
.adders {
  display: flex;
  flex-wrap: wrap;
  gap: 7px 6px;
  margin: 1px 12px 0;
  padding: 6px 6px 2px;
  border: 2px solid #606060;
  border-radius: 10px;
  background: #444;
}
.adders button {
  gap: 4px;
  height: 47px;
  padding: 0 14px;
  border-radius: 4px;
  background: #4c9eb4;
  font-size: 21px;
}
.adders .grey {
  background: #68747e;
}
.branch {
  width: 16px;
  height: 22px;
}
.quote {
  width: 22px;
  height: 22px;
}
.code {
  width: 26px;
  height: 22px;
}
.grip {
  position: absolute;
  left: 50%;
  top: 3px;
  width: 28px;
  height: 12px;
  margin-left: -14px;
  background: linear-gradient(#000 0 4px, #4c4c4c 4px 8px, #000 8px);
}
.side-grip {
  position: absolute;
  right: 0;
  top: 814px;
  width: 12px;
  height: 28px;
  border: 2px solid #555;
  background: repeating-linear-gradient(90deg, #000 0 3px, #555 3px 5px);
}
.data-list {
  flex: 1;
  min-height: 0;
  padding: 19px 8px 0 10px;
  overflow: hidden;
}
.data-list .group {
  padding-top: 10px;
}
.datum {
  position: relative;
  height: 80px;
  margin-top: 8px;
  padding: 10px;
  border-radius: 10px;
  background: #fff;
}
.datum.lone {
  margin: 0 12px 8px;
}
.datum-row {
  display: flex;
  align-items: center;
  height: 61px;
  padding-right: 12px;
  border: 2px solid #444;
  border-radius: 8px;
  background: #e6e6e6;
  color: #000;
  overflow: hidden;
}
.key {
  flex: none;
  width: 160px;
  align-self: stretch;
  padding: 12px 0 8px 10px;
  background: #444;
  color: #fff;
  overflow: hidden;
  white-space: nowrap;
}
.val {
  flex: 1;
  min-width: 0;
  margin: 0 14px 0 10px;
  overflow: hidden;
  white-space: nowrap;
}

/* recorded page */
.viewer {
  display: flex;
  flex-direction: column;
  min-width: 0;
  padding: 0 6px 80px 0;
  background: #f4f4f4;
  color: #212529;
}
.viewer-tabs {
  display: flex;
  height: 64px;
  gap: 2px;
}
.viewer-tabs > .current {
  width: 160px;
  padding-top: 13px;
  background: #fff;
  border: 2px solid #d6d6d6;
  border-bottom: none;
  border-radius: 10px 10px 0 0;
  text-align: center;
}
.viewer-tabs > button {
  width: 74px;
  padding-top: 4px;
  border: 2px solid #d6d6d6;
  border-bottom: none;
  border-radius: 10px 10px 0 0;
}
.spacer {
  flex: 1;
}
.viewer-tabs > .downloads {
  width: 170px;
  height: 52px;
  margin: 7px 22px 0 0;
  padding: 0 0 6px;
  border: 2px solid #e6e6e6;
  border-radius: 6px;
}
.viewer-tabs > .more {
  width: 20px;
  padding: 0 4px 0 0;
  margin-right: 14px;
  border: none;
}
.more svg {
  width: 8px;
  height: 28px;
}
.viewer-frame {
  flex: 1;
  display: flex;
  flex-direction: column;
  border: 2px solid #d6d6d6;
  border-left: none;
}
.viewer-nav {
  display: flex;
  height: 59px;
  padding-left: 2px;
  border-bottom: 2px solid #d6d6d6;
}
.viewer-nav button {
  width: 60px;
  border-right: 2px solid #d6d6d6;
}
.address {
  flex: 1;
  background: #fff;
}
.page {
  flex: 1;
  padding: 46px 164px;
  background: #f6f8fb;
}
.page-card {
  height: 291px;
  padding: 134px 62px 0;
  border-radius: 20px;
  background: #fff;
}
.page-card input {
  width: 100%;
  height: 65px;
  border: 2px solid #f09478;
  border-radius: 10px;
  background: #fdfff0;
}

/* modal */
.backdrop {
  position: absolute;
  inset: 0;
  display: flex;
  justify-content: center;
  padding: 42px 0 34px 2px;
  background: rgba(0, 0, 0, 0.5);
}
.modal {
  display: flex;
  flex-direction: column;
  width: 50%;
  background: #fff;
  border: 2px solid #909090;
  border-radius: 8px;
  overflow: hidden;
}
.modal-header {
  padding: 29px 24px;
  background: #444;
  border-bottom: 2px solid #dee2e6;
  color: #fff;
}
.modal-header h1 {
  font-size: 30px;
  line-height: 38px;
}
.modal-body {
  flex: 1;
  min-height: 0;
  padding: 24px;
  overflow-y: auto;
  scrollbar-width: none;
}
.nav-tabs {
  display: flex;
  margin-bottom: 35px;
  border-bottom: 2px solid #dee2e6;
  color: #495057;
}
.nav-tabs a {
  padding: 13px 24px 14px;
  border: 2px solid transparent;
  border-bottom: none;
}
.nav-tabs .active {
  background: #f8f9fc;
  border-color: #dee2e6;
  border-radius: 6px 6px 0 0;
}
.columns {
  display: grid;
  grid-template-columns: minmax(0, 1fr) minmax(0, 1fr);
  gap: 12px 60px;
  align-items: start;
}
.col > label, .label {
  display: block;
  margin-bottom: 12px;
}
.control {
  display: block;
  width: 100%;
  height: 61px;
  margin-bottom: 12px;
  padding: 10px 18px;
  border: 2px solid #ced4da;
  border-radius: 6px;
  background: #fff;
  color: #495057;
}
textarea.control {
  height: 204px;
  margin-bottom: 0;
}
textarea::-webkit-resizer {
  background: linear-gradient(135deg, transparent 47%, #666 47% 54%, transparent 54% 72%, #666 72% 79%, transparent 79%);
}
.control::placeholder {
  color: #6c757d;
}
.bot-icon {
  width: 220px;
  height: 220px;
  margin-bottom: 6px;
  border: 6px solid #ccc;
  border-radius: 10px;
  background: #444;
}
.btn {
  gap: 8px;
  height: 61px;
  padding: 0 20px;
  border-radius: 6px;
  background: #6c757d;
  color: #fff;
}
.btn.primary {
  background: #2f7cf6;
}
.btn.square {
  width: 49px;
  height: 47px;
  padding: 0;
}
.btn.reset {
  gap: 6px;
  height: 47px;
  padding: 0 14px;
  font-size: 21px;
}
.panel {
  position: relative;
  padding: 36px 48px 30px;
  background: #f5f5f5;
  border: 2px solid #dee2e6;
  border-radius: 8px;
}
.field {
  position: relative;
  padding: 10px;
  border: 2px solid #999;
  border-radius: 10px;
  background: #fff;
}
.field-row {
  display: flex;
  min-height: 63px;
  border: 2px solid #999;
  border-radius: 8px;
  background: #efefef;
  color: #000;
  overflow: hidden;
}
.field .val {
  align-self: center;
  margin-right: 0;
  font-size: 21px;
}
.pick {
  display: flex;
  align-items: center;
  justify-content: center;
  width: 64px;
  background: #fff;
  border-left: 2px solid #999;
}
.field-group {
  margin: 7px -12px 6px;
  padding: 12px 12px 14px;
  background: #2d6fb5;
  border: 2px solid #666;
  border-radius: 10px;
}
.field-group .field {
  margin-top: 7px;
}
.field-group .group-head {
  height: 66px;
}
.field-group .pill {
  margin-right: -2px;
}
input[type="checkbox"] {
  appearance: none;
  width: 26px;
  height: 26px;
  margin: 0;
  border: 2px solid #767676;
  border-radius: 5px;
  background: #fff;
}
input[type="checkbox"]:checked {
  border-color: #e6893a;
  background: #e6893a;
}
input[type="checkbox"]:checked::before {
  content: "";
  display: block;
  width: 22px;
  height: 22px;
  background: #3b3b3b;
  clip-path: polygon(8% 56%, 24% 44%, 38% 64%, 78% 8%, 94% 18%, 42% 92%);
}
.editor {
  flex: 1;
  min-width: 0;
  padding: 12px 12px 10px 10px;
}
.editor input[type="text"] {
  display: block;
  width: 100%;
  height: 47px;
  padding: 0 6px;
  border: 2px solid #ced4da;
  border-radius: 6px;
  background: #efefef;
  font-size: 21px;
}
.editor .boxed[type="text"] {
  padding: 0 12px;
  background: #fff;
  color: #495057;
}
.options {
  display: flex;
  align-items: center;
  gap: 6px;
  margin-top: 9px;
  font-size: 20px;
}
.options span {
  width: 130px;
  height: 46px;
  padding: 3px 6px;
  border: 2px solid #ced4da;
  border-right: none;
  border-radius: 6px 0 0 6px;
  background: #666;
  color: #fff;
  font-size: 22px;
}
.panel-actions {
  display: flex;
  justify-content: flex-end;
  gap: 5px;
}
.highlight {
  position: absolute;
  right: 12px;
  bottom: 11px;
  width: 205px;
  height: 461px;
  border: 5px solid #46a2d4;
}
.modal-footer {
  display: flex;
  justify-content: flex-end;
  gap: 12px;
  padding: 24px;
  background: #f5f5f5;
  border-top: 2px solid #dee2e6;
}
```
